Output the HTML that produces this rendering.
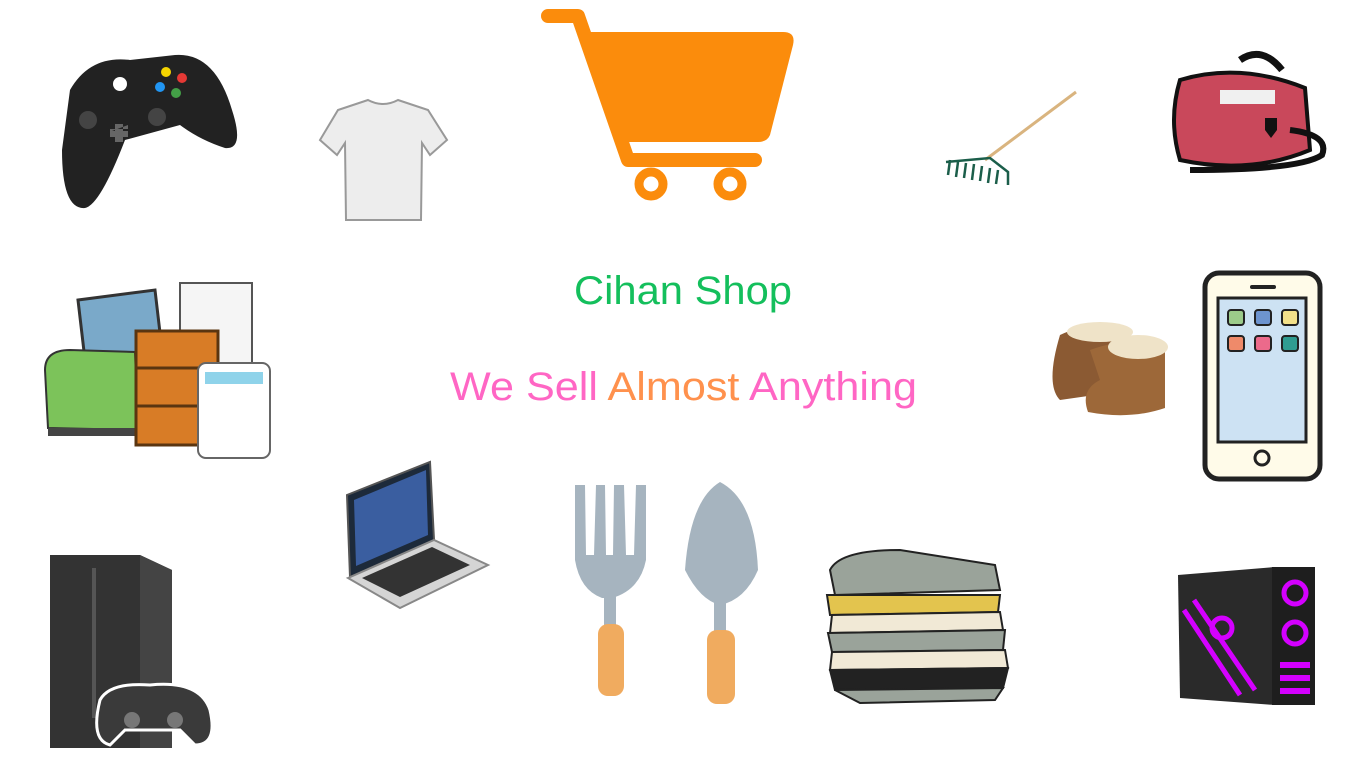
<!DOCTYPE html>
<html><head><meta charset="utf-8"><style>
html,body{margin:0;padding:0;background:#fff;width:1366px;height:768px;overflow:hidden}
svg{display:block}
</style></head><body>
<svg width="1366" height="768" viewBox="0 0 1366 768" xmlns="http://www.w3.org/2000/svg" font-family="Liberation Sans, sans-serif">
<rect width="1366" height="768" fill="#fff"/>
<!-- cart -->
<g fill="none" stroke="#fb8c0c" stroke-linecap="round" stroke-linejoin="round">
<path d="M548 16 L578 16 L628 160 L755 160" stroke-width="14"/>
<circle cx="651" cy="184" r="12" stroke-width="9"/>
<circle cx="730" cy="184" r="12" stroke-width="9"/>
</g>
<path d="M585 32 L783 32 Q796 32 793 45 L770 135 Q767 142 758 142 L623 142 Z" fill="#fb8c0c"/>
<!-- text -->
<text x="683" y="304" text-anchor="middle" font-size="40" fill="#14bf5c" textLength="218" lengthAdjust="spacingAndGlyphs">Cihan Shop</text>
<text x="450" y="400" font-size="40" textLength="467" lengthAdjust="spacingAndGlyphs"><tspan fill="#ff66c4">We Sell </tspan><tspan fill="#ff914d">Almost </tspan><tspan fill="#ff66c4">Anything</tspan></text>
<!-- controller -->
<path d="M70 90 Q90 55 130 60 L175 55 Q215 52 232 110 Q245 150 225 148 Q200 140 180 125 L125 140 Q100 205 85 208 Q62 210 62 150 Z" fill="#222"/>
<circle cx="120" cy="84" r="7" fill="#fff"/><circle cx="166" cy="72" r="5" fill="#f5d400"/><circle cx="182" cy="78" r="5" fill="#e53935"/><circle cx="160" cy="87" r="5" fill="#2196f3"/><circle cx="176" cy="93" r="5" fill="#43a047"/>
<circle cx="88" cy="120" r="9" fill="#444"/><circle cx="157" cy="117" r="9" fill="#444"/>
<path d="M112 131h16v-6h0M115 124h8v18h-8zM110 129h18v8h-18z" fill="#666"/>
<!-- t-shirt -->
<path d="M368 100 Q383 108 398 100 L428 110 L447 140 L430 155 L422 143 L421 220 L346 220 L345 143 L337 155 L320 140 L338 110 Z" fill="#ededed" stroke="#999" stroke-width="2"/>
<!-- rake -->
<line x1="1076" y1="92" x2="985" y2="160" stroke="#d9b47f" stroke-width="3"/>
<path d="M946 162 L990 158 L1008 172 L1008 185 M950 160 L948 175 M958 162 L956 177 M966 163 L964 178 M974 164 L972 180 M982 166 L980 181 M990 168 L988 183 M998 170 L996 184" stroke="#1b5e4a" stroke-width="2.5" fill="none"/>
<!-- duffel bag -->
<path d="M1240 60 Q1262 45 1282 70" stroke="#111" stroke-width="7" fill="none"/>
<path d="M1180 80 Q1240 62 1305 88 L1310 150 Q1250 175 1180 160 Q1168 120 1180 80Z" fill="#c9485b" stroke="#111" stroke-width="4"/>
<path d="M1290 130 Q1330 135 1322 155 Q1300 170 1190 170" stroke="#111" stroke-width="6" fill="none"/>
<rect x="1220" y="90" width="55" height="14" fill="#f0f0f0"/>
<path d="M1265 118 l12 0 l0 12 l-6 8 l-6 -8z" fill="#111"/>
<!-- furniture -->
<path d="M78 300 L155 290 L162 350 L85 360Z" fill="#7aa9c9" stroke="#333" stroke-width="3"/>
<rect x="180" y="283" width="72" height="110" fill="#f5f5f5" stroke="#555" stroke-width="2"/>
<path d="M45 370 Q45 350 70 350 L135 352 L138 430 L48 428Z" fill="#7cc35a" stroke="#333" stroke-width="2"/>
<rect x="48" y="428" width="90" height="8" fill="#444"/>
<rect x="136" y="331" width="82" height="114" fill="#d87c26" stroke="#5a3510" stroke-width="3"/>
<line x1="136" y1="368" x2="218" y2="368" stroke="#5a3510" stroke-width="3"/><line x1="136" y1="406" x2="218" y2="406" stroke="#5a3510" stroke-width="3"/>
<rect x="198" y="363" width="72" height="95" rx="8" fill="#fff" stroke="#666" stroke-width="2"/>
<rect x="205" y="372" width="58" height="12" fill="#8fd3ea"/>
<!-- boots -->
<path d="M1060 335 Q1090 320 1130 335 L1130 390 L1060 400 Q1045 385 1060 335Z" fill="#8b5a33"/>
<ellipse cx="1100" cy="332" rx="33" ry="10" fill="#efe3c8"/>
<path d="M1090 350 Q1130 335 1165 350 L1165 408 Q1130 420 1088 412 Q1080 390 1100 380Z" fill="#9d6839"/>
<ellipse cx="1138" cy="347" rx="30" ry="12" fill="#efe3c8"/>
<!-- phone -->
<rect x="1205" y="273" width="115" height="206" rx="14" fill="#fffbe9" stroke="#222" stroke-width="5"/>
<rect x="1218" y="298" width="88" height="144" fill="#cde2f3" stroke="#222" stroke-width="3"/>
<rect x="1250" y="285" width="26" height="4" rx="2" fill="#222"/>
<circle cx="1262" cy="458" r="7" fill="none" stroke="#222" stroke-width="3"/>
<g stroke="#222" stroke-width="2"><rect x="1228" y="310" width="16" height="15" rx="3" fill="#9ccb8a"/><rect x="1255" y="310" width="16" height="15" rx="3" fill="#6d94cf"/><rect x="1282" y="310" width="16" height="15" rx="3" fill="#f4e18a"/><rect x="1228" y="336" width="16" height="15" rx="3" fill="#ef8a6a"/><rect x="1255" y="336" width="16" height="15" rx="3" fill="#ec6a8b"/><rect x="1282" y="336" width="16" height="15" rx="3" fill="#2f9c91"/></g>
<!-- laptop -->
<path d="M347 495 L430 462 L434 540 L350 577Z" fill="#1d2a3a" stroke="#555" stroke-width="2"/>
<path d="M354 500 L426 470 L428 535 L356 566Z" fill="#3a5ea0"/>
<path d="M348 578 L434 540 L488 565 L400 608Z" fill="#d5d5d5" stroke="#888" stroke-width="2"/>
<path d="M362 578 L432 547 L470 565 L400 597Z" fill="#333"/>
<!-- tools -->
<path d="M575 485 L575 560 Q580 590 602 598 L612 598 Q640 590 646 560 L646 485 L636 485 L634 555 L626 555 L624 485 L614 485 L613 555 L606 555 L605 485 L596 485 L594 555 L586 555 L585 485Z" fill="#a6b4bf"/>
<rect x="604" y="596" width="12" height="30" fill="#a6b4bf"/>
<rect x="598" y="624" width="26" height="72" rx="10" fill="#f0ab5f"/>
<path d="M720 482 Q690 500 685 570 Q700 600 720 605 Q745 600 758 570 Q755 500 720 482Z" fill="#a6b4bf"/>
<rect x="714" y="600" width="12" height="32" fill="#a6b4bf"/>
<rect x="707" y="630" width="28" height="74" rx="10" fill="#f0ab5f"/>
<!-- clothes pile -->
<g stroke="#222" stroke-width="2">
<path d="M830 570 Q840 550 900 550 L995 565 L1000 590 L835 595Z" fill="#9aa39a"/>
<path d="M827 595 L1000 595 L998 612 L830 615Z" fill="#e3c44e"/>
<path d="M832 615 L1000 612 L1003 630 L830 633Z" fill="#f1e9d6"/>
<path d="M828 633 L1005 630 L1003 650 L832 652Z" fill="#9aa39a"/>
<path d="M832 652 L1005 650 L1008 668 L830 670Z" fill="#f1e9d6"/>
<path d="M830 670 L1008 668 L1003 688 L835 690Z" fill="#222"/>
<path d="M835 690 L1003 688 L995 700 L860 703Z" fill="#9aa39a"/>
</g>
<!-- console -->
<path d="M50 555 L140 555 L172 570 L172 748 L50 748Z" fill="#333"/>
<path d="M140 555 L172 570 L172 748 L140 748Z" fill="#444"/>
<rect x="92" y="568" width="4" height="150" fill="#555"/>
<path d="M100 700 Q110 682 150 685 Q200 680 210 710 Q218 745 195 745 L180 730 L125 730 L110 745 Q90 740 100 700Z" fill="#3a3a3a" stroke="#fff" stroke-width="3"/>
<circle cx="132" cy="720" r="8" fill="#777"/><circle cx="175" cy="720" r="8" fill="#777"/>
<!-- pc case -->
<path d="M1178 575 L1275 567 L1275 705 L1180 698Z" fill="#2a2a2a"/>
<rect x="1272" y="567" width="43" height="138" fill="#1e1e1e"/>
<g fill="none" stroke="#d400ff" stroke-width="5"><circle cx="1295" cy="593" r="11"/><circle cx="1295" cy="633" r="11"/><circle cx="1222" cy="628" r="10"/><path d="M1184 610 L1240 695 M1194 600 L1255 690"/></g>
<path d="M1280 665 l30 0 M1280 678 l30 0 M1280 691 l30 0" stroke="#d400ff" stroke-width="6"/>
</svg>
</body></html>
